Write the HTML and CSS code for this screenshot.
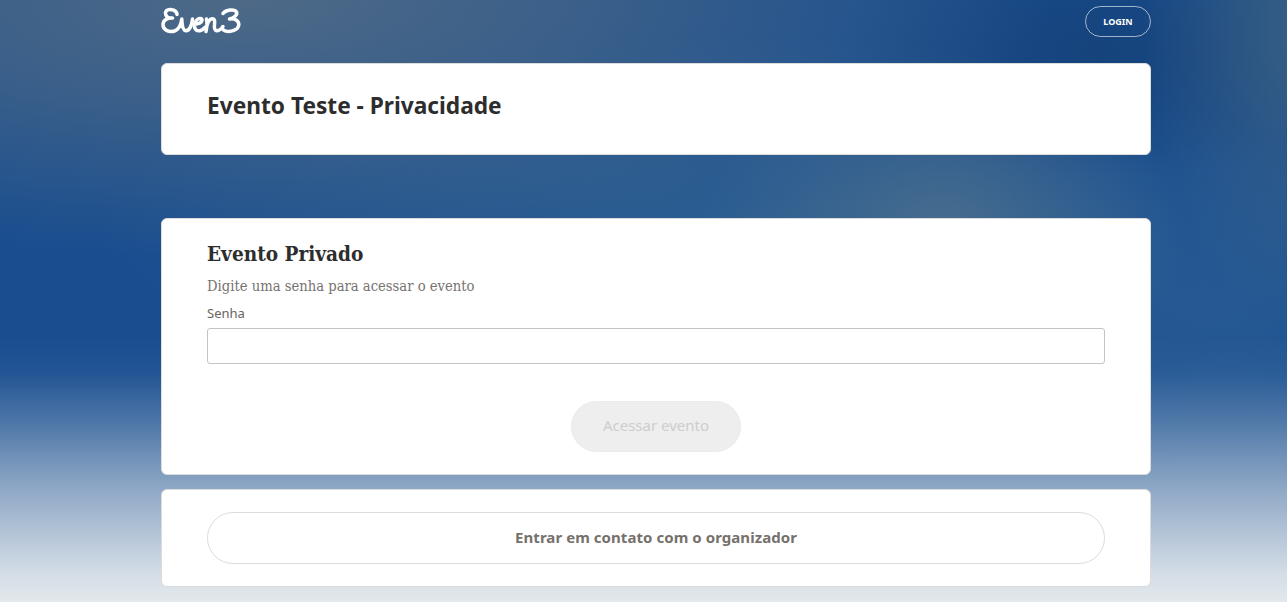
FILE: index.html
```html
<!DOCTYPE html>
<html lang="pt-BR">
<head>
<meta charset="utf-8">
<title>Evento Teste - Privacidade</title>
<link rel="stylesheet" href="styles.css">
</head>
<body>
<div class="page">
  <header class="topbar">
    <svg class="logo" viewBox="0 0 80 28" width="80" height="28" aria-label="Even3">
      <path d="M16 7.500C16 3.500 10 1.500 6.500 3 3.500 4.500 4 8.800 7 10.300 8.500 11 10 11.200 11.500 11 6.500 10.800 2 13 2 17.800 2 23.500 8.500 25.500 13.500 24 18 22.500 20 17.500 20.800 12 21 17 22 23.800 25 23.800 28.500 23.800 31 18 31.500 12"/>
      <path d="M33 17C36.500 17 40.500 15.800 41 13.300 41.200 11.300 38.500 10.800 36.500 12.300 33 15 32.500 20.500 35 22.800 37.500 24.800 41.500 23.500 44.500 20"/>
      <path d="M45.500 12C46.200 15 46 20 45 24.500M46 18.500C47 14 49.500 11.500 51.500 11.800 54 12 53.800 15 53.500 17.500 53 21 53.800 24.200 56.500 23.800 58 23.500 59 22.800 60.500 21.500"/>
      <path d="M62 6.500C65 2.500 73.500 1.800 75.500 5 77 8 72.500 11 68.500 12 73.500 11 78 13.500 77.800 17.800 77.300 23 69.500 25.500 64 23.800 61.500 23 60.500 20.500 62 19.500"/>
    </svg>
    <a class="login" href="#">LOGIN</a>
  </header>

  <main class="stack">
    <section class="card card-title">
      <h1>Evento Teste - Privacidade</h1>
    </section>

    <section class="card card-form">
      <h2>Evento Privado</h2>
      <p class="lead">Digite uma senha para acessar o evento</p>
      <label class="field-label" for="senha">Senha</label>
      <input class="field" id="senha" type="password">
      <div class="actions">
        <button class="btn-disabled" type="button" disabled>Acessar evento</button>
      </div>
    </section>

    <section class="card card-contact">
      <a class="btn-contact" href="#">Entrar em contato com o organizador</a>
    </section>
  </main>
</div>
</body>
</html>
```
FILE: styles.css
```css
* { box-sizing: border-box; }

html, body {
  margin: 0;
  height: 100%;
}

body {
  font-family: "Noto Sans", "Open Sans", sans-serif;
  background-color: #184d8f;
  background-image:
    linear-gradient(to bottom,
      rgba(226, 232, 236, 0) 56%,
      rgba(226, 232, 236, .05) 62%,
      rgba(226, 232, 236, .26) 70%,
      rgba(226, 232, 236, .46) 76.6%,
      rgba(226, 232, 236, .63) 83%,
      rgba(226, 232, 236, .79) 89.4%,
      rgba(226, 232, 236, .94) 95.8%,
      rgba(226, 232, 236, 1) 100%),
    radial-gradient(ellipse 240px 170px at 945px 225px, rgba(100, 125, 140, .55), rgba(100, 125, 140, 0)),
    radial-gradient(ellipse 620px 190px at 720px 225px, rgba(80, 125, 150, .34), rgba(80, 125, 150, 0)),
    radial-gradient(ellipse 800px 260px at 250px 0, rgba(105, 120, 130, .66), rgba(105, 120, 130, .4) 45%, rgba(105, 120, 130, 0)),
    radial-gradient(ellipse 170px 300px at 1310px 30px, rgba(90, 115, 125, .5), rgba(90, 115, 125, 0)),
    radial-gradient(ellipse 320px 180px at 1230px 320px, rgba(70, 120, 160, .28), rgba(70, 120, 160, 0)),
    radial-gradient(ellipse 260px 130px at 1100px 50px, rgba(20, 60, 110, .6), rgba(20, 60, 110, 0));
  background-repeat: no-repeat;
  overflow: hidden;
}

.page {
  width: 990px;
  margin-left: 161px;
}

.topbar {
  height: 63px;
  display: flex;
  justify-content: space-between;
  align-items: flex-start;
}

.logo {
  margin-top: 7px;
  fill: none;
  stroke: #fff;
  stroke-width: 3.5;
  stroke-linecap: round;
  stroke-linejoin: round;
}

.login {
  margin-top: 6px;
  width: 66px;
  height: 31px;
  display: flex;
  align-items: center;
  justify-content: center;
  border: 1px solid rgba(255, 255, 255, .6);
  border-radius: 16px;
  color: #fff;
  font-size: 9px;
  font-weight: 700;
  text-decoration: none;
}

.stack {
  display: flex;
  flex-direction: column;
}

.card {
  background: #fff;
  border: 1px solid #dcdcdc;
  border-radius: 6px;
  padding-left: 45px;
  padding-right: 45px;
}

.card-title {
  height: 92px;
  padding-top: 27px;
  margin-bottom: 63px;
}

h1 {
  margin: 0;
  font-size: 22.7px;
  font-weight: 700;
  line-height: 30px;
  color: #2d2d2d;
}

.card-form {
  height: 257px;
  padding-top: 21px;
  margin-bottom: 14px;
}

h2 {
  margin: 0;
  font-family: "DejaVu Serif Condensed", "DejaVu Serif", serif;
  font-size: 20.6px;
  font-weight: 700;
  line-height: 28px;
  color: #2d2d2d;
}

.lead {
  margin: 8px 0 0;
  font-family: "DejaVu Serif Condensed", "DejaVu Serif", serif;
  font-size: 14.65px;
  line-height: 20px;
  color: #76726f;
}

.field-label {
  display: block;
  margin-top: 8px;
  font-size: 13px;
  line-height: 18px;
  color: #68645f;
}

.field {
  display: block;
  width: 100%;
  height: 36px;
  margin-top: 6px;
  border: 1px solid #c4c4c4;
  border-radius: 3px;
  background: #fff;
}

.actions {
  display: flex;
  justify-content: center;
  margin-top: 37px;
}

.btn-disabled {
  width: 170px;
  height: 51px;
  padding-bottom: 4px;
  border: 1px solid #ebebeb;
  border-radius: 26px;
  background: #eeeeee;
  color: #cfcdcb;
  font-family: inherit;
  font-size: 15px;
}

.card-contact {
  height: 98px;
  padding-top: 22px;
}

.btn-contact {
  display: flex;
  align-items: center;
  justify-content: center;
  height: 52px;
  padding-bottom: 2px;
  border: 1px solid #dcdcdc;
  border-radius: 26px;
  color: #76716c;
  font-size: 15px;
  letter-spacing: .06px;
  font-weight: 700;
  text-decoration: none;
}
```
